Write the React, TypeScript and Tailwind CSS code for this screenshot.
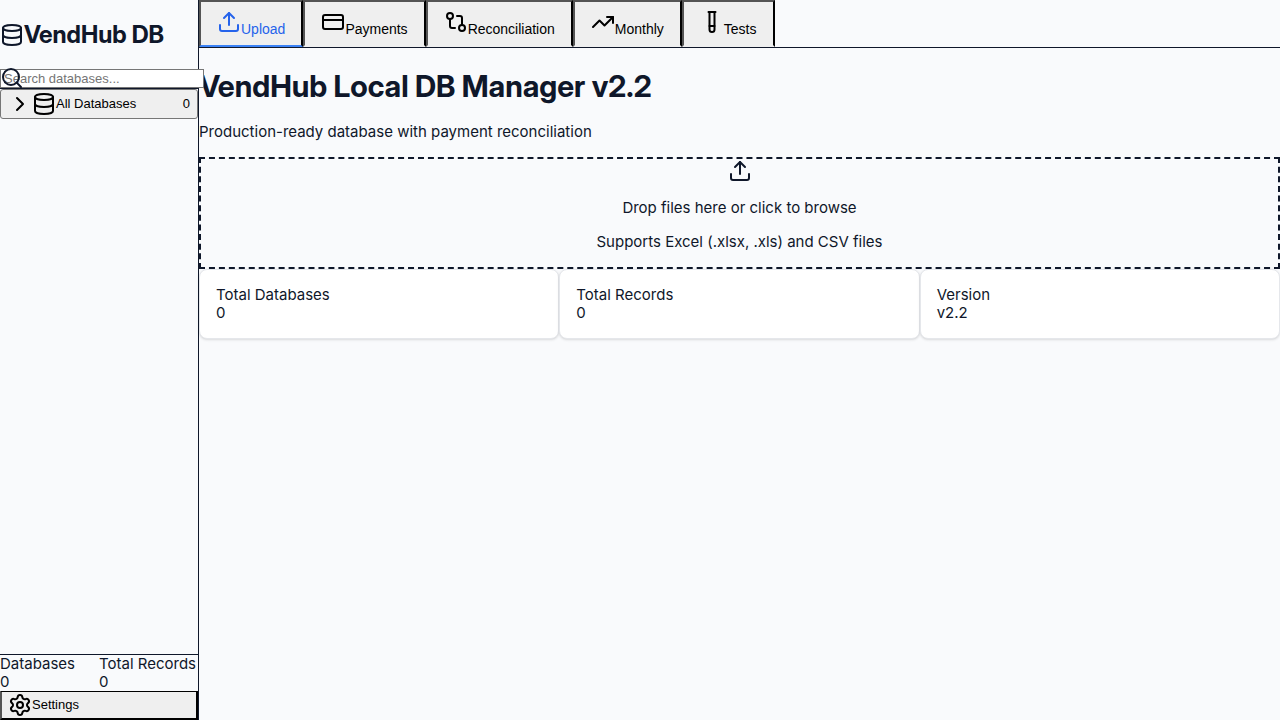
import type { ReactNode } from "react";
import {
  ChevronRight,
  CreditCard,
  Database,
  GitCompare,
  Search,
  Settings,
  TestTube,
  TrendingUp,
  Upload,
} from "lucide-react";

const tabs = [
  { label: "Upload", Icon: Upload, active: true },
  { label: "Payments", Icon: CreditCard, active: false },
  { label: "Reconciliation", Icon: GitCompare, active: false },
  { label: "Monthly", Icon: TrendingUp, active: false },
  { label: "Tests", Icon: TestTube, active: false },
];

const stats = [
  { label: "Total Databases", value: "0" },
  { label: "Total Records", value: "0" },
  { label: "Version", value: "v2.2" },
];

function Tab({ active, children }: { active: boolean; children: ReactNode }) {
  return (
    <button
      type="button"
      className={
        "border-2 border-black [border-style:outset] bg-[#efefef] px-4 py-2 font-['Liberation_Sans',sans-serif] text-sm leading-[15px] " +
        (active ? "border-b-[#3b82f6] text-[#2563eb] [border-bottom-style:solid]" : "border-b-transparent text-black")
      }
    >
      {children}
    </button>
  );
}

function Sidebar() {
  return (
    <aside className="flex w-[199px] shrink-0 flex-col border-r border-[#0f172a]">
      <div className="border-b border-[#0f172a]">
        <h2 className="my-5 flex items-center font-['Inter_Display',Inter,sans-serif] text-2xl leading-[29px] font-bold">
          <Database size={24} />
          VendHub DB
        </h2>
        <div className="relative h-[19px]">
          <Search size={24} className="absolute top-[-3px] left-0 z-20" />
          <input
            type="text"
            aria-label="Search databases"
            placeholder="Search databases..."
            className="absolute top-0 left-0 z-10 h-[19px] w-[204px] border border-[#767676] bg-white px-[3px] font-['Liberation_Sans',sans-serif] text-[13px] leading-4 text-black placeholder:text-[#757575]"
          />
        </div>
      </div>
      <nav className="flex-1">
        <button
          type="button"
          className="flex w-full items-center rounded-[3px] border border-[#767676] bg-[#efefef] px-[7px] py-0.5 font-['Liberation_Sans',sans-serif] text-[13px] text-black"
        >
          <ChevronRight size={24} />
          <Database size={24} />
          <span className="flex-1 text-left">All Databases</span>
          <span>0</span>
        </button>
      </nav>
      <footer className="border-t border-[#0f172a]">
        <dl className="grid grid-cols-2 leading-[18px] whitespace-nowrap">
          <div>
            <dt>Databases</dt>
            <dd>0</dd>
          </div>
          <div>
            <dt>Total Records</dt>
            <dd>0</dd>
          </div>
        </dl>
        <button
          type="button"
          className="flex w-full items-center border-2 border-t border-black [border-style:outset] [border-top-style:solid] bg-[#efefef] px-1.5 py-px font-['Liberation_Sans',sans-serif] text-[13px] text-black"
        >
          <Settings size={24} />
          Settings
        </button>
      </footer>
    </aside>
  );
}

export default function App() {
  return (
    <div className="flex min-h-screen bg-[#f9fafc] font-[Inter,sans-serif] text-[15px] text-[#0f172a]">
      <Sidebar />
      <div className="min-w-0 flex-1">
        <header className="flex border-b border-[#0f172a]">
          {tabs.map(({ label, Icon, active }) => (
            <Tab key={label} active={active}>
              <Icon size={24} className="inline align-baseline" />
              {label}
            </Tab>
          ))}
        </header>
        <main>
          <h1 className="mt-5 mb-[18px] font-['Inter_Display',Inter,sans-serif] text-[30px] leading-[37px] font-bold">
            VendHub Local DB Manager v2.2
          </h1>
          <p className="mb-4 leading-[18px]">Production-ready database with payment reconciliation</p>
          <section className="space-y-4 border-2 border-dashed border-[#0f172a] pb-4 text-center leading-[18px]">
            <div className="h-6">
              <Upload size={24} className="inline align-top" />
            </div>
            <p>Drop files here or click to browse</p>
            <p>Supports Excel (.xlsx, .xls) and CSV files</p>
          </section>
          <dl className="grid grid-cols-3 leading-[18px]">
            {stats.map(({ label, value }) => (
              <div key={label} className="rounded-lg border border-gray-200 bg-white p-4 shadow-sm">
                <dt>{label}</dt>
                <dd>{value}</dd>
              </div>
            ))}
          </dl>
        </main>
      </div>
    </div>
  );
}
